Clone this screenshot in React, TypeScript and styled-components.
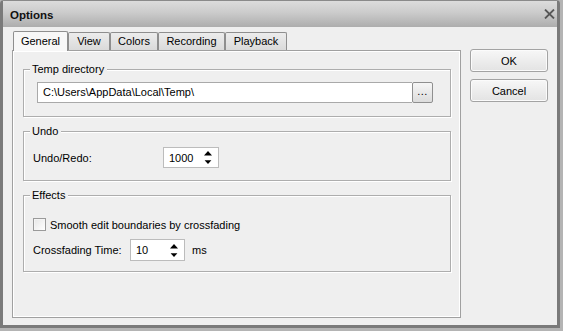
import React from 'react';
import styled, { createGlobalStyle } from 'styled-components';

const GlobalStyle = createGlobalStyle`
  html, body {
    margin: 0;
    padding: 0;
  }
  body {
    background: #bdbdbd;
    font-family: 'Liberation Sans', Arial, sans-serif;
    font-size: 11px;
    color: #000;
  }
`;

const tabs = [
  { label: 'General', width: 55 },
  { label: 'View', width: 42 },
  { label: 'Colors', width: 48 },
  { label: 'Recording', width: 67 },
  { label: 'Playback', width: 62 },
];

function SpinBox({ value, width, height }: { value: string; width: number; height: number }) {
  return (
    <Spin $width={width} $height={height}>
      <SpinValue>{value}</SpinValue>
      <svg width="8" height="13" viewBox="0 0 8 13">
        <polygon points="4,0 8,4.6 0,4.6" fill="#000" />
        <polygon points="0.6,9.3 7.4,9.3 4,13" fill="#000" />
      </svg>
    </Spin>
  );
}

export default function App() {
  return (
    <>
      <GlobalStyle />
      <Screen>
        <Window>
          <TitleBar>
            <Title>Options</Title>
            <svg width="11" height="10" viewBox="0 0 11 10">
              <path d="M1 0.5 L10 9.5 M10 0.5 L1 9.5" stroke="#575757" strokeWidth="1.8" />
            </svg>
          </TitleBar>
          <Body>
            <TabColumn>
              <TabStrip>
                {tabs.map((t, i) => (
                  <Tab key={t.label} $active={i === 0} $width={t.width}>
                    {t.label}
                  </Tab>
                ))}
              </TabStrip>
              <Panel>
                <GroupBox $pad="12px 17px 13px 13px">
                  <Legend>Temp directory</Legend>
                  <PathRow>
                    <PathField>{'C:\\Users\\AppData\\Local\\Temp\\'}</PathField>
                    <BrowseButton>...</BrowseButton>
                  </PathRow>
                </GroupBox>

                <GroupBox $pad="15px 10px 12px 9px">
                  <Legend>Undo</Legend>
                  <FieldRow>
                    <FieldLabel $width={130}>Undo/Redo:</FieldLabel>
                    <SpinBox value="1000" width={56} height={21} />
                  </FieldRow>
                </GroupBox>

                <GroupBox $pad="22px 10px 10px 9px">
                  <Legend>Effects</Legend>
                  <CheckRow>
                    <CheckBox />
                    <span>Smooth edit boundaries by crossfading</span>
                  </CheckRow>
                  <FieldRow>
                    <FieldLabel $width={97}>Crossfading Time:</FieldLabel>
                    <SpinBox value="10" width={55} height={22} />
                    <Unit>ms</Unit>
                  </FieldRow>
                </GroupBox>
              </Panel>
            </TabColumn>

            <ButtonColumn>
              <DialogButton>OK</DialogButton>
              <DialogButton>Cancel</DialogButton>
            </ButtonColumn>
          </Body>
        </Window>
      </Screen>
    </>
  );
}

const Screen = styled.div`
  width: 563px;
  height: 331px;
  overflow: hidden;
  background: #b4b4b4;
`;

const Window = styled.div`
  width: 560px;
  height: 328px;
  box-sizing: border-box;
  border: 3px solid #7a7a7a;
  border-top: 1px solid #8a8a8a;
  border-radius: 4px 4px 0 0;
  background: #efefef;
  display: flex;
  flex-direction: column;
`;

const TitleBar = styled.div`
  height: 26px;
  flex-shrink: 0;
  display: flex;
  align-items: center;
  justify-content: space-between;
  padding: 0 2px 0 7px;
  background: linear-gradient(to bottom, #dcdcdc 0%, #cbcbcb 45%, #adadad 100%);
`;

const Title = styled.span`
  font-weight: bold;
  font-size: 11.5px;
  padding-top: 2px;
  color: #111;
`;

const Body = styled.div`
  flex: 1;
  display: flex;
  gap: 9px;
  padding: 4px 9px 7px 9px;
`;

const TabColumn = styled.div`
  width: 449px;
  display: flex;
  flex-direction: column;
`;

const TabStrip = styled.div`
  height: 19px;
  display: flex;
  align-items: flex-end;
  padding-left: 1px;
`;

const Tab = styled.div<{ $active: boolean; $width: number }>`
  position: relative;
  z-index: 1;
  box-sizing: border-box;
  width: ${(p) => p.$width}px;
  height: ${(p) => (p.$active ? 20 : 18)}px;
  margin-bottom: ${(p) => (p.$active ? -1 : 0)}px;
  padding-bottom: ${(p) => (p.$active ? 2 : 1)}px;
  display: flex;
  align-items: center;
  justify-content: center;
  border: 1px solid #8e8e8e;
  border-bottom: none;
  border-radius: 2px 2px 0 0;
  background: ${(p) =>
    p.$active ? '#f7f7f7' : 'linear-gradient(to bottom, #ececec, #dadada)'};
  color: #000;
`;

const Panel = styled.div`
  flex: 1;
  box-sizing: border-box;
  border: 1px solid #a0a0a0;
  box-shadow: inset 1px 1px 0 #fff, inset -1px -1px 0 #fff;
  background: #efefef;
  display: flex;
  flex-direction: column;
  gap: 14px;
  padding: 18px 9px 0 10px;
`;

const GroupBox = styled.div<{ $pad: string }>`
  position: relative;
  border: 1px solid #adadad;
  box-shadow: 1px 1px 0 #fff, inset 1px 1px 0 #fff;
  padding: ${(p) => p.$pad};
  display: flex;
  flex-direction: column;
  gap: 8px;
`;

const Legend = styled.span`
  position: absolute;
  top: -7px;
  left: 6px;
  padding: 0 3px 0 2px;
  line-height: 13px;
  background: #efefef;
`;

const PathRow = styled.div`
  display: flex;
  height: 21px;
`;

const PathField = styled.div`
  flex: 1;
  box-sizing: border-box;
  border: 1px solid #a9a9a9;
  border-right: none;
  background: #fff;
  padding-left: 5px;
  line-height: 19px;
`;

const BrowseButton = styled.div`
  width: 21px;
  box-sizing: border-box;
  border: 1px solid #8f8f8f;
  border-radius: 2px;
  background: linear-gradient(to bottom, #f6f6f6, #dcdcdc);
  text-align: center;
  line-height: 17px;
  letter-spacing: 0.5px;
`;

const FieldRow = styled.div`
  display: flex;
  align-items: center;
`;

const FieldLabel = styled.span<{ $width: number }>`
  width: ${(p) => p.$width}px;
  flex-shrink: 0;
`;

const Spin = styled.div<{ $width: number; $height: number }>`
  width: ${(p) => p.$width}px;
  height: ${(p) => p.$height}px;
  box-sizing: border-box;
  border: 1px solid #bcbcbc;
  background: #fff;
  display: flex;
  align-items: center;
  padding: 0 6px 0 5px;
`;

const SpinValue = styled.span`
  flex: 1;
`;

const Unit = styled.span`
  margin-left: 7px;
`;

const CheckRow = styled.div`
  display: flex;
  align-items: center;
  gap: 4px;
  height: 13px;
`;

const CheckBox = styled.div`
  width: 13px;
  height: 13px;
  box-sizing: border-box;
  border: 1px solid #9a9a9a;
  background: linear-gradient(135deg, #e6e6e6, #ffffff);
  box-shadow: inset 1px 1px 0 #f4f4f4;
`;

const ButtonColumn = styled.div`
  width: 78px;
  display: flex;
  flex-direction: column;
  gap: 7px;
  padding-top: 18px;
`;

const DialogButton = styled.div`
  height: 23px;
  box-sizing: border-box;
  border: 1px solid #a3a3a3;
  border-radius: 3px;
  background: linear-gradient(to bottom, #f7f7f7, #e3e3e3);
  box-shadow: inset 0 0 0 1px #fbfbfb;
  display: flex;
  align-items: center;
  justify-content: center;
`;
